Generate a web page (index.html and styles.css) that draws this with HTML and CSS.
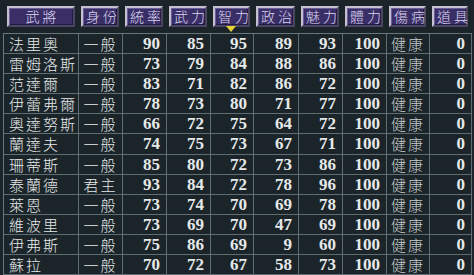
FILE: index.html
```html
<!DOCTYPE html>
<html lang="zh-Hant">
<head>
<meta charset="utf-8">
<link rel="stylesheet" href="styles.css">
</head>
<body>
<div class="screen">
  <div class="head">
    <div class="hcell"><div class="btn">武將</div></div>
    <div class="hcell"><div class="btn">身份</div></div>
    <div class="hcell"><div class="btn">統率</div></div>
    <div class="hcell"><div class="btn">武力</div></div>
    <div class="hcell sorted"><div class="btn">智力</div><span class="tri"></span></div>
    <div class="hcell"><div class="btn">政治</div></div>
    <div class="hcell"><div class="btn">魅力</div></div>
    <div class="hcell"><div class="btn">體力</div></div>
    <div class="hcell"><div class="btn">傷病</div></div>
    <div class="hcell"><div class="btn">道具</div></div>
  </div>
  <div class="table">
    <div class="row"><span class="name">法里奧</span><span class="rank">一般</span><span class="num">90</span><span class="num">85</span><span class="num">95</span><span class="num">89</span><span class="num">93</span><span class="num">100</span><span class="st">健康</span><span class="num">0</span></div>
    <div class="row"><span class="name">雷姆洛斯</span><span class="rank">一般</span><span class="num">73</span><span class="num">79</span><span class="num">84</span><span class="num">88</span><span class="num">86</span><span class="num">100</span><span class="st">健康</span><span class="num">0</span></div>
    <div class="row"><span class="name">范達爾</span><span class="rank">一般</span><span class="num">83</span><span class="num">71</span><span class="num">82</span><span class="num">86</span><span class="num">72</span><span class="num">100</span><span class="st">健康</span><span class="num">0</span></div>
    <div class="row"><span class="name">伊蕾弗爾</span><span class="rank">一般</span><span class="num">78</span><span class="num">73</span><span class="num">80</span><span class="num">71</span><span class="num">77</span><span class="num">100</span><span class="st">健康</span><span class="num">0</span></div>
    <div class="row"><span class="name">奧達努斯</span><span class="rank">一般</span><span class="num">66</span><span class="num">72</span><span class="num">75</span><span class="num">64</span><span class="num">72</span><span class="num">100</span><span class="st">健康</span><span class="num">0</span></div>
    <div class="row"><span class="name">蘭達夫</span><span class="rank">一般</span><span class="num">74</span><span class="num">75</span><span class="num">73</span><span class="num">67</span><span class="num">71</span><span class="num">100</span><span class="st">健康</span><span class="num">0</span></div>
    <div class="row"><span class="name">珊蒂斯</span><span class="rank">一般</span><span class="num">85</span><span class="num">80</span><span class="num">72</span><span class="num">73</span><span class="num">86</span><span class="num">100</span><span class="st">健康</span><span class="num">0</span></div>
    <div class="row"><span class="name">泰蘭德</span><span class="rank">君主</span><span class="num">93</span><span class="num">84</span><span class="num">72</span><span class="num">78</span><span class="num">96</span><span class="num">100</span><span class="st">健康</span><span class="num">0</span></div>
    <div class="row"><span class="name">萊恩</span><span class="rank">一般</span><span class="num">73</span><span class="num">74</span><span class="num">70</span><span class="num">69</span><span class="num">78</span><span class="num">100</span><span class="st">健康</span><span class="num">0</span></div>
    <div class="row"><span class="name">維波里</span><span class="rank">一般</span><span class="num">73</span><span class="num">69</span><span class="num">70</span><span class="num">47</span><span class="num">69</span><span class="num">100</span><span class="st">健康</span><span class="num">0</span></div>
    <div class="row"><span class="name">伊弗斯</span><span class="rank">一般</span><span class="num">75</span><span class="num">86</span><span class="num">69</span><span class="num">9</span><span class="num">60</span><span class="num">100</span><span class="st">健康</span><span class="num">0</span></div>
    <div class="row"><span class="name">蘇拉</span><span class="rank">一般</span><span class="num">70</span><span class="num">72</span><span class="num">67</span><span class="num">58</span><span class="num">73</span><span class="num">100</span><span class="st">健康</span><span class="num">0</span></div>
  </div>
</div>
</body>
</html>
```

FILE: styles.css
```css
html, body {
  margin: 0;
  padding: 0;
  background: #1b2529;
}
.screen {
  width: 474px;
  height: 275px;
  overflow: hidden;
  background: #1b2529;
  font-family: "Noto Sans CJK TC", "Noto Sans CJK SC", sans-serif;
  color: #e6e9ea;
}
.head, .row {
  display: grid;
  grid-template-columns: 75px 44px 44px 44px 43px 45px 44px 44px 43px 42px;
}
.head {
  height: 33px;
  padding-left: 4px;
  align-items: start;
}
.hcell {
  position: relative;
  padding: 6px 4px 0 2px;
}
.hcell:first-child {
  padding-left: 3px;
}
.btn {
  height: 21px;
  box-sizing: border-box;
  background: #3a2e66;
  border: 2px solid;
  border-color: #c4c0d0 #4a4560 #4a4560 #c4c0d0;
  box-shadow: inset 1px 1px 0 #6a5f98, inset -1px -1px 0 #221a44;
  color: #dcd6f2;
  font-size: 14px;
  font-weight: 300;
  line-height: 17px;
  text-align: center;
  letter-spacing: 3px;
  text-indent: 3px;
  white-space: nowrap;
}
.tri {
  position: absolute;
  left: 15px;
  top: 26px;
  width: 0;
  height: 0;
  border-left: 5px solid transparent;
  border-right: 5px solid transparent;
  border-top: 6px solid #e8d23a;
}
.table {
  display: grid;
  grid-template-rows: repeat(12, 1fr);
  height: 242px;
  box-sizing: border-box;
  border-top: 1px solid #66757a;
  border-left: 1px solid #66757a;
  margin-left: 3px;
  margin-right: 2px;
}
.row > span {
  border-right: 1px solid #5e6d71;
  border-bottom: 1px solid #5e6d71;
  display: flex;
  align-items: center;
  white-space: nowrap;
  overflow: hidden;
  line-height: 17px;
  min-height: 0;
}
.name {
  padding-left: 5px;
  font-size: 15px;
  font-weight: 300;
  letter-spacing: 2px;
}
.rank {
  justify-content: center;
  font-size: 15px;
  font-weight: 300;
  letter-spacing: 2px;
}
.st {
  padding-left: 4px;
  font-size: 15px;
  font-weight: 300;
  letter-spacing: 2px;
  color: #c9cdcf;
}
.num {
  justify-content: flex-end;
  padding-right: 6px;
  font-family: "Liberation Serif", serif;
  font-weight: bold;
  font-size: 17px;
}
```
